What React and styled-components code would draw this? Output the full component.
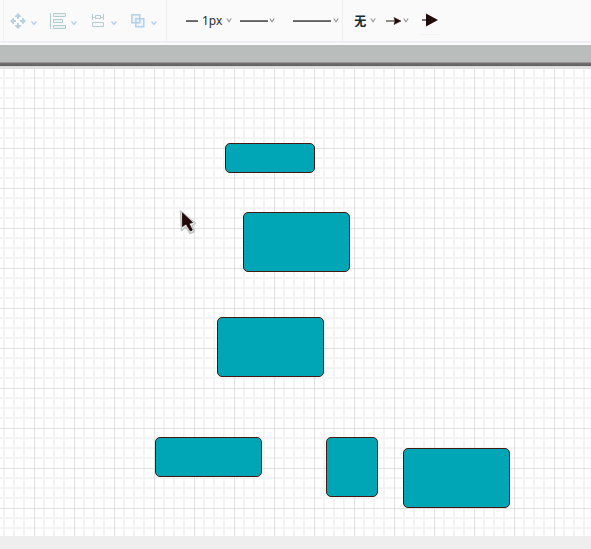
import React from "react";
import styled, { createGlobalStyle } from "styled-components";

const GlobalStyle = createGlobalStyle`
  * { box-sizing: border-box; }
  body { margin: 0; background: #eeeeee; font-family: "Noto Sans", "Noto Sans CJK SC", sans-serif; }
`;

const Page = styled.div`
  display: flex;
  flex-direction: column;
  min-height: 100vh;
`;

const Toolbar = styled.header`
  display: flex;
  height: 45px;
  padding-left: 3px;
  background: linear-gradient(#fafafa 41px, #eef0f3 41px, #eef0f3 43px, #fafbfc 43px);
`;

const Group = styled.div`
  display: flex;
  align-items: center;
  height: 41px;
  gap: ${(p) => p.$gap}px;
  padding: 0 ${(p) => p.$end}px 0 ${(p) => p.$start}px;
  border-left: 1px solid #eff0f1;
`;

const ToolButton = styled.button`
  display: flex;
  align-items: center;
  flex: none;
  gap: ${(p) => p.$gap || 0}px;
  height: 28px;
  padding: 0 0 0 ${(p) => p.$lead || 0}px;
  border: 0;
  background: transparent;
  color: #2b2b30;
  font-family: inherit;
  font-size: 12px;
  line-height: 16px;
  svg { display: block; flex: none; }
`;

const SelectedButton = styled(ToolButton)`
  width: 22px;
  justify-content: center;
  border-bottom: 1px solid #f3f3f3;
`;

const Stroke = styled.span`
  width: ${(p) => p.$length}px;
  height: 2px;
  background: #747474;
  border-bottom: 1px solid #626262;
`;

const Glyph = styled.span`
  font-family: "Noto Sans CJK SC", sans-serif;
  font-size: 12px;
  line-height: 16px;
  font-weight: 700;
  color: #102c30;
`;

const Divider = styled.div`
  height: 23px;
  flex: none;
  background: linear-gradient(
    #b9bdbb 17px, #959595 17px, #959595 18px, #717171 18px,
    #606060 21px, #d6d6d6 21px, #e5e5e5 23px
  );
`;

const minorLines = `transparent 9px, #f3f3f3 9px, #f3f3f3 11px, transparent 11px,
  transparent 19px, #f3f3f3 19px, #f3f3f3 21px, transparent 21px,
  transparent 29px, #f3f3f3 29px, #f3f3f3 31px, transparent 31px`;

const Canvas = styled.main`
  position: relative;
  flex: 1;
  overflow: hidden;
  background-color: #ffffff;
  background-image:
    linear-gradient(90deg, #e0e0e0 1px, transparent 1px),
    linear-gradient(#e0e0e0 1px, transparent 1px),
    linear-gradient(90deg, ${minorLines}),
    linear-gradient(${minorLines});
  background-size: 40px 40px;
  background-position: 34px 0;
`;

const Shape = styled.div`
  position: absolute;
  left: ${(p) => p.$x}px;
  top: ${(p) => p.$y}px;
  width: ${(p) => p.$w}px;
  height: ${(p) => p.$h}px;
  border: 1px solid #43190f;
  border-radius: 5px;
  background: #00a6b6;
`;

const Pointer = styled.svg`
  position: absolute;
  left: 178px;
  top: 140px;
`;

const Footer = styled.footer`
  height: 13px;
  flex: none;
  background: #eeeeee;
`;

const shapes = [
  { x: 225, y: 75, w: 90, h: 30 },
  { x: 243, y: 144, w: 107, h: 60 },
  { x: 217, y: 249, w: 107, h: 60 },
  { x: 155, y: 369, w: 107, h: 40 },
  { x: 326, y: 369, w: 52, h: 60 },
  { x: 403, y: 380, w: 107, h: 60 },
];

const Chevron = ({ pale }) => (
  <svg width="6" height={pale ? 10 : 8} viewBox={pale ? "0 -5 6 10" : "0 0 6 8"} aria-hidden="true">
    <path
      d={pale ? "M.5 .5 3 3.4 5.5 .5" : "M.8 1.5 3 4.7 5.2 1.5"}
      fill="none"
      stroke={pale ? "#b3d0ed" : "#929292"}
      strokeWidth={pale ? 1.5 : 1.1}
    />
  </svg>
);

const MoveIcon = () => (
  <svg width="18" height="18" viewBox="0 0 18 18" fill="#b9d0e0" aria-hidden="true">
    <path d="M8 1 5 4v1h2v2h2V5h2V4ZM8 17l3-3v-1H9v-2H7v2H5v1ZM0 9l3-3h1v2h2v2H4v2H3ZM16 9l-3-3h-1v2h-2v2h2v2h1Z" />
  </svg>
);

const AlignIcon = () => (
  <svg width="18" height="18" viewBox="0 0 18 18" fill="#edf3f3" stroke="#b2cdd2" aria-hidden="true">
    <path d="M.5 1v16M3.5 1.5h12v3h-12zM3.5 7.5h9v3h-9zM3.5 13.5h12v3h-12z" />
  </svg>
);

const DistributeIcon = () => (
  <svg width="18" height="18" viewBox="0 0 18 18" fill="none" stroke="#b2ccd3" aria-hidden="true">
    <path d="M2.5 2v6M13.5 2v6M5.5 3.5h5v3h-5zM3 5.5h2M11 5.5h2M2.5 10.5h11v4h-11z" />
  </svg>
);

const CombineIcon = () => (
  <svg width="18" height="18" viewBox="0 0 18 18" fill="#e1edf7" fillOpacity=".5" stroke="#b4d0ea" strokeWidth="1.5" aria-hidden="true">
    <path d="M1.8 2.8h8v8h-8zM5.8 6.8h8v8h-8z" />
  </svg>
);

const arrangeTools = [
  ["Move", MoveIcon],
  ["Align", AlignIcon],
  ["Distribute", DistributeIcon],
  ["Combine", CombineIcon],
];

export default function App() {
  return (
    <Page>
      <GlobalStyle />
      <Toolbar>
        <Group $gap={13} $start={6} $end={9}>
          {arrangeTools.map(([label, Icon]) => (
            <ToolButton key={label} $gap={3} aria-label={label}>
              <Icon />
              <Chevron pale />
            </ToolButton>
          ))}
        </Group>
        <Group $gap={8} $start={19} $end={3}>
          <ToolButton $gap={4} aria-label="Line width 1px">
            <Stroke $length={12} />
            <span>1px</span>
            <Chevron />
          </ToolButton>
          <ToolButton $gap={1} aria-label="Line style">
            <Stroke $length={28} />
            <Chevron />
          </ToolButton>
          <ToolButton $gap={2} $lead={10} aria-label="Line type">
            <Stroke $length={38} />
            <Chevron />
          </ToolButton>
        </Group>
        <Group $gap={10} $start={11} $end={0}>
          <ToolButton $gap={4} aria-label="起点：无">
            <Glyph>无</Glyph>
            <Chevron />
          </ToolButton>
          <ToolButton $gap={2} aria-label="End arrow">
            <svg width="15" height="8" viewBox="0 0 15 8" aria-hidden="true">
              <path d="M0 4h11" stroke="#555050" strokeWidth="1.3" />
              <path d="M8 .5 15 4 8 7.5 9 4Z" fill="#200b09" stroke="#200b09" strokeWidth=".5" />
            </svg>
            <Chevron />
          </ToolButton>
          <SelectedButton aria-label="Solid arrow">
            <svg width="16" height="14" viewBox="0 0 16 14" aria-hidden="true">
              <path d="M0 7h6" stroke="#4b4545" strokeWidth="1.5" />
              <path d="M4 .5 16 7 4 13.5Z" fill="#200b09" />
            </svg>
          </SelectedButton>
        </Group>
      </Toolbar>
      <Divider />
      <Canvas>
        {shapes.map((s) => (
          <Shape key={`${s.x}-${s.y}`} $x={s.x} $y={s.y} $w={s.w} $h={s.h} />
        ))}
        <Pointer width="20" height="28" viewBox="0 0 20 28" aria-hidden="true">
          <path
            d="M2.5 3 3.5 22.5 8 19 12 25.5 16.5 23.5 14 18 17.5 15.5Z"
            fill="#e9ebea"
            stroke="#c0c6c4"
            strokeWidth="1.5"
            strokeLinejoin="round"
          />
          <path
            d="M4.5 5v13.5L8 16l4.5 7 1.8-1-3.3-6.5 3.5-1Z"
            fill="#200807"
            stroke="#200807"
            strokeWidth=".8"
          />
        </Pointer>
      </Canvas>
      <Footer />
    </Page>
  );
}
